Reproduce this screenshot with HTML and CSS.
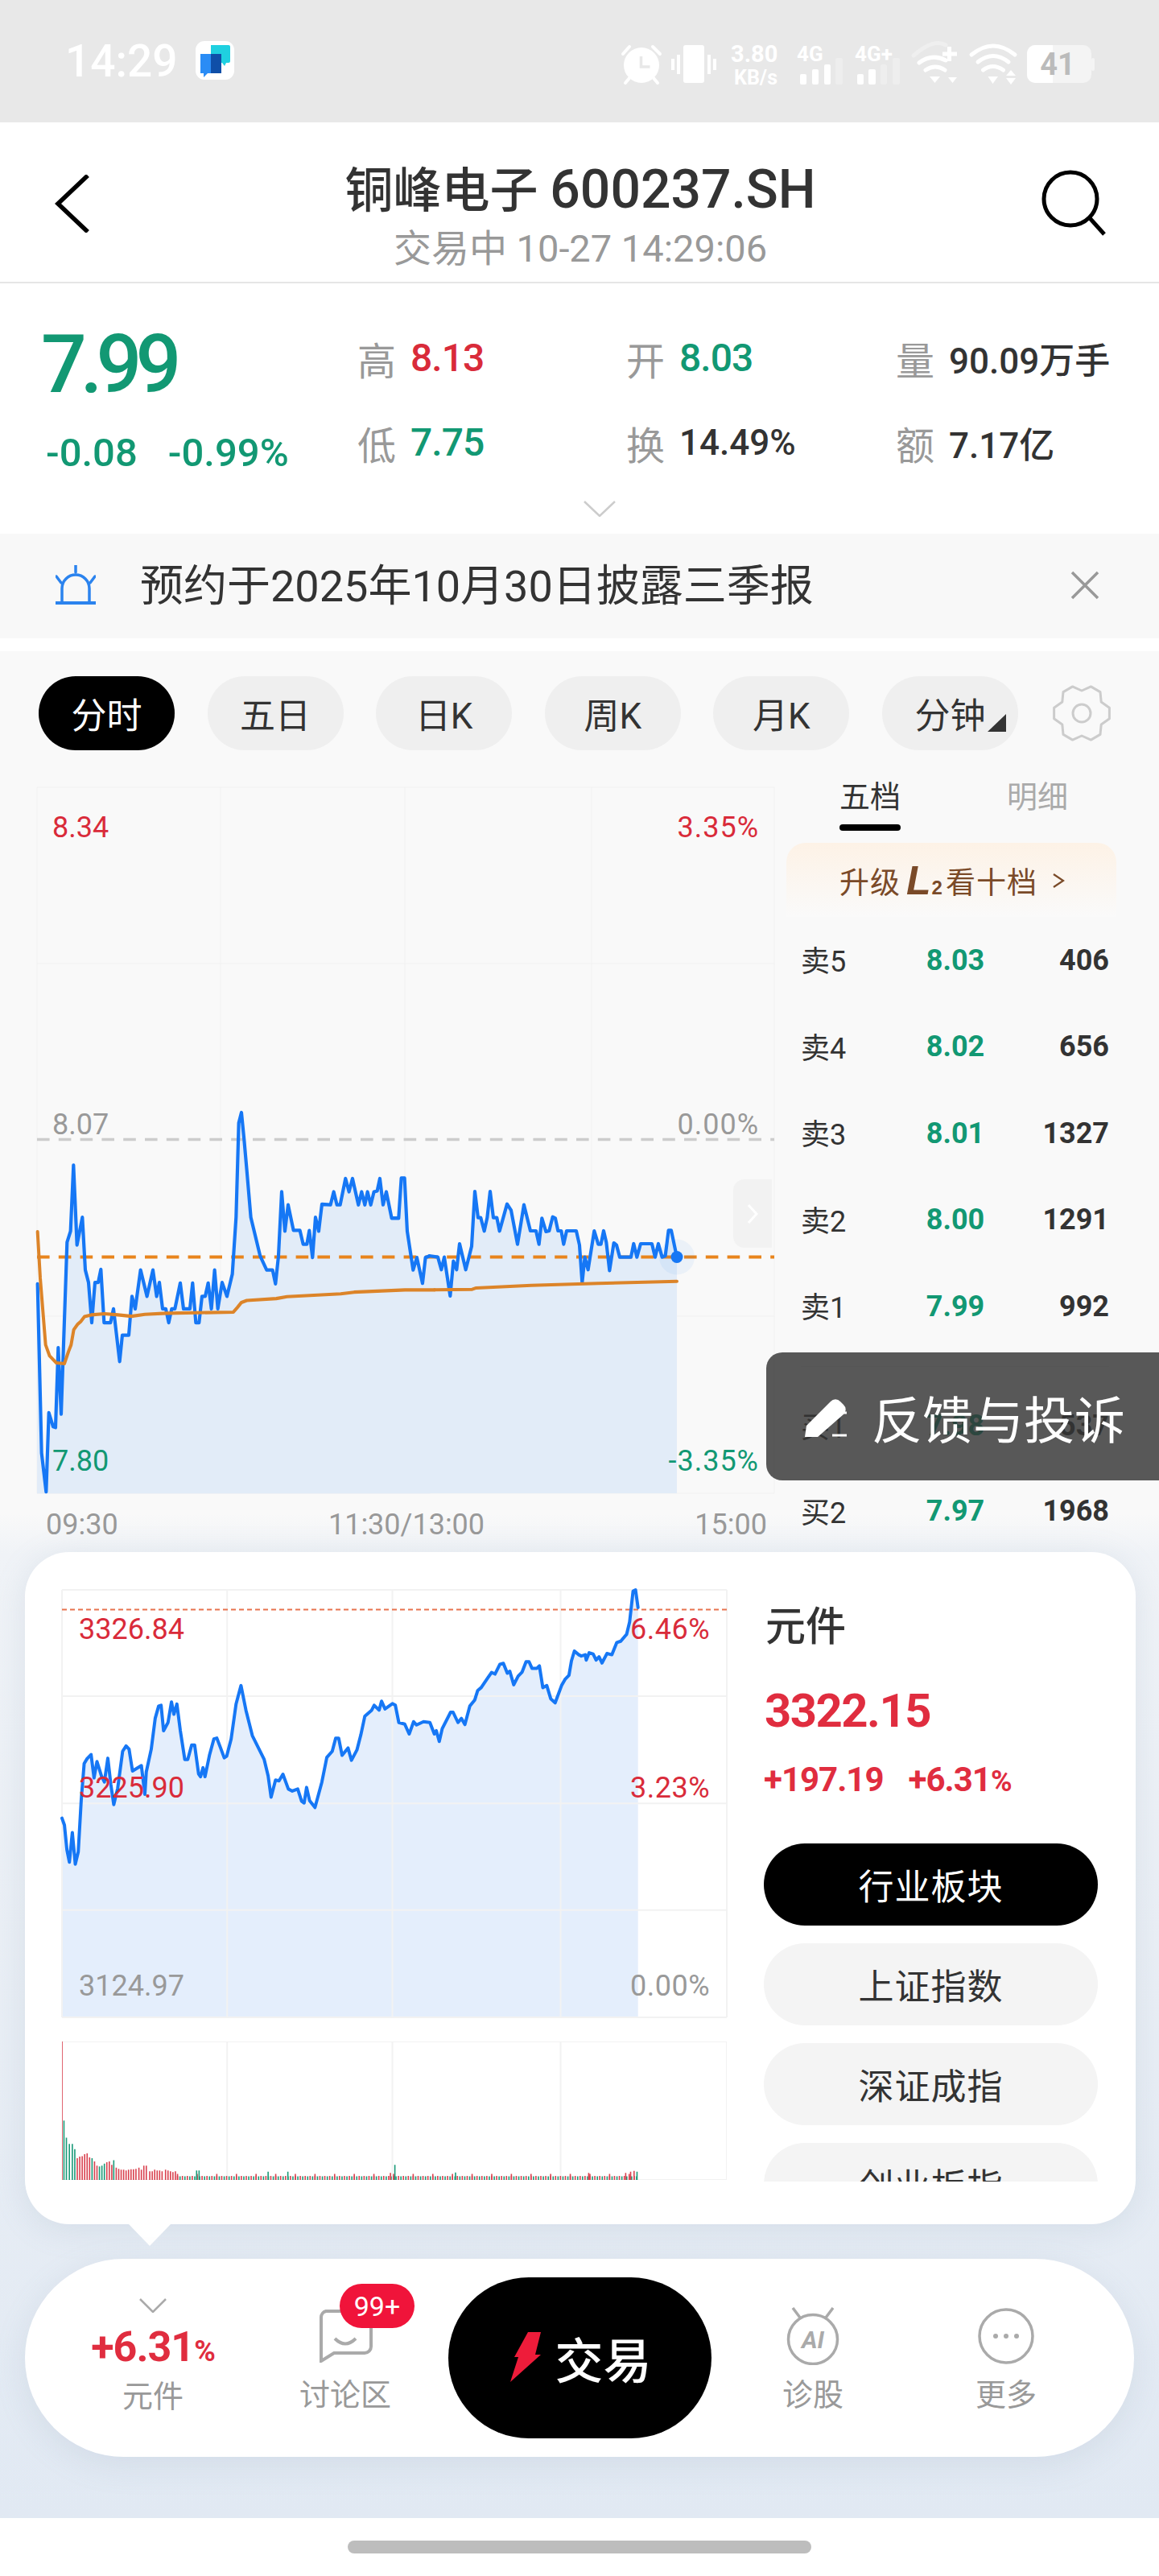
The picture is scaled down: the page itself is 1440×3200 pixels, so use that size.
FILE: index.html
```html
<!DOCTYPE html>
<html lang="zh-CN">
<head>
<meta charset="utf-8">
<title>铜峰电子 600237.SH</title>
<link rel="stylesheet" href="styles.css">
</head>
<body>
<div class="page">
  <div class="status">
    <span class="clock">14:29</span>
    <svg class="app-icon" viewBox="0 0 48 48"><rect width="48" height="48" rx="11" fill="#fff"/><path d="M19 5h22a2 2 0 0 1 2 2v18a2 2 0 0 1-2 2h-3l-2 4-3-4H19z" fill="#1fd0e0"/><path d="M6 16h24a2 2 0 0 1 2 2v20a2 2 0 0 1-2 2H15l-5 5v-5H6z" fill="#2a8cf5"/><rect x="19" y="16" width="13" height="24" fill="#0f4fa8"/></svg>
    <svg class="status-icons" viewBox="760 40 620 80">
      <g fill="#fff">
        <circle cx="797" cy="81" r="22"/>
        <g stroke="#fff" stroke-width="4" stroke-linecap="round" fill="none"><path d="M774 67l8-9M811 58l9 9M777 103l5-6M817 103l-5-6"/></g>
        <path d="M796.5 70v13h11" stroke="#e8e8e8" stroke-width="3.5" fill="none"/>
        <rect x="849" y="56" width="26" height="47" rx="3"/>
        <rect x="841" y="68" width="4" height="24"/><rect x="834" y="73" width="4" height="14"/><rect x="879" y="68" width="4" height="24"/><rect x="886" y="73" width="4" height="14"/>
        <text x="908" y="77" class="st-speed">3.80</text>
        <text x="912" y="105" class="st-unit">KB/s</text>
        <text x="990" y="76" class="st-net">4G</text>
        <rect x="994" y="92" width="8" height="13" rx="2"/><rect x="1009" y="86" width="8" height="19" rx="2"/><rect x="1024" y="80" width="8" height="25" rx="2"/><rect x="1038" y="72" width="9" height="33" rx="2" opacity=".25"/>
        <text x="1062" y="76" class="st-net">4G+</text>
        <rect x="1065" y="92" width="8" height="13" rx="2"/><rect x="1079" y="86" width="9" height="19" rx="2"/><rect x="1094" y="80" width="8" height="25" rx="2" opacity=".25"/><rect x="1109" y="72" width="9" height="33" rx="2" opacity=".25"/>
        <g fill="none" stroke="#fff" stroke-width="5" stroke-linecap="round">
          <path d="M1135 69q25-22 40-13" opacity=".3"/><path d="M1142 78q16-12 33-3"/><path d="M1150 87q12-8 24 0"/>
          <path d="M1179.500 58v18M1171 67h18" stroke-linecap="butt"/>
          <path d="M1207 68q27-22 54 0"/><path d="M1215 77q19-15 38 0"/><path d="M1221.500 87q12-9 25 0"/>
        </g>
        <path d="M1155 95h13l-6.500 8zM1178 96h11l-5.500 7zM1227.500 95h12.500l-6.500 9zM1250 94h12l-6-7zM1250 97h12l-6 8z"/>
        <rect x="1276" y="56" width="80" height="47" rx="10" opacity=".5"/>
        <path d="M1286 56h22v47h-22a10 10 0 0 1-10-10V66a10 10 0 0 1 10-10z"/>
        <rect x="1356" y="72" width="4" height="16" rx="2" opacity=".5"/>
      </g>
      <text x="1314" y="93" class="st-batt">41</text>
    </svg>
  </div>

  <header class="header">
    <svg class="back" viewBox="0 0 44 72"><path d="M41 1L4 36l37 35" fill="none" stroke="#000" stroke-width="5.500"/></svg>
    <div class="title-block">
      <div class="title">铜峰电子 <span class="title-code">600237.SH</span></div>
      <div class="subtitle">交易中 10-27 14:29:06</div>
    </div>
    <svg class="search" viewBox="0 0 80 82"><circle cx="36" cy="36" r="33" fill="none" stroke="#000" stroke-width="5"/><path d="M60 60l18 20" stroke="#000" stroke-width="5"/></svg>
  </header>

  <section class="quote">
    <div class="quote-grid">
      <div class="price-col">
        <div class="big-price">7.99</div>
        <div class="change"><span>-0.08</span><span>-0.99%</span></div>
      </div>
      <div class="stat"><span class="stat-k">高</span><span class="stat-v red">8.13</span></div>
      <div class="stat"><span class="stat-k">开</span><span class="stat-v green">8.03</span></div>
      <div class="stat"><span class="stat-k">量</span><span class="stat-v dark">90.09万手</span></div>
      <div class="stat"><span class="stat-k">低</span><span class="stat-v green">7.75</span></div>
      <div class="stat"><span class="stat-k">换</span><span class="stat-v dark">14.49%</span></div>
      <div class="stat"><span class="stat-k">额</span><span class="stat-v dark">7.17亿</span></div>
    </div>
    <svg class="more-chev" viewBox="0 0 40 20"><path d="M1 1l19 18L39 1" fill="none" stroke="#ccc" stroke-width="2.500"/></svg>
  </section>

  <section class="notice">
    <svg class="notice-icon" viewBox="0 0 50 50"><g fill="none" stroke="#2b83ee" stroke-width="3.500"><path d="M8 47V29a17 17 0 0 1 34 0v18"/><path d="M25 0v9M1 14l6 8M49 14l-6 8" stroke-linecap="round"/></g><rect y="45" width="50" height="4" fill="#2b83ee"/></svg>
    <span class="notice-text">预约于2025年10月30日披露三季报</span>
    <svg class="notice-close" viewBox="0 0 36 36"><path d="M2 2l32 32M34 2L2 34" fill="none" stroke="#999" stroke-width="3.500"/></svg>
  </section>

  <section class="market">
    <nav class="tabs">
      <span class="tab tab-on">分时</span>
      <span class="tab">五日</span>
      <span class="tab">日K</span>
      <span class="tab">周K</span>
      <span class="tab">月K</span>
      <span class="tab tab-menu">分钟</span>
      <svg class="gear" viewBox="-2 -2 74 72"><path d="M69.400 27.300L69.400 40.700 59.200 48 58 60.400 46.400 67.100 35 62 23.600 67.100 12 60.400 10.800 48 .6 40.700 .6 27.300 10.800 20 12 7.600 23.600 .9 35 6 46.400 .9 58 7.600 59.200 20z" fill="none" stroke="#ccc" stroke-width="3" stroke-linejoin="round"/><circle cx="35" cy="34" r="11" fill="none" stroke="#ccc" stroke-width="3"/></svg>
    </nav>

    <div class="board">
      <div class="chart-col">
        <div class="main-chart">
          <svg class="main-svg" viewBox="46 978 919 877">
            <g class="grid-lines">
              <path d="M46 978H962M46 1197H962M46 1635H962M46 1855H962M46 978V1855M274 978V1855M503 978V1855M735 978V1855M962 978V1855"/>
            </g>
            <g transform="translate(40 1340) scale(.3333 .3444)">
              <polygon class="area" points="18,1496 20,740 35,1350 52,1490 62,1205 78,1255 87,1258 97,970 108,1210 130,590 143,550 154,312 167,600 187,500 198,690 210,735 222,880 234,735 246,735 256,688 268,880 292,880 303,830 326,1020 336,925 360,925 372,785 384,830 404,690 428,785 450,690 464,785 474,735 486,830 498,830 509,880 520,830 532,830 552,737 564,830 588,830 598,737 610,880 622,880 633,785 645,785 656,737 668,830 680,690 692,830 708,735 726,785 746,705 760,500 770,160 780,122 790,220 800,330 815,500 850,640 874,690 896,690 907,740 918,640 930,408 942,550 954,455 974,547 998,547 1010,597 1024,597 1033,548 1045,645 1056,500 1068,550 1080,453 1112,455 1124,408 1136,455 1148,455 1168,360 1181,408 1194,360 1216,455 1228,408 1240,455 1250,408 1262,455 1274,408 1286,405 1296,360 1308,455 1320,408 1340,503 1366,503 1376,358 1388,358 1398,550 1420,690 1434,645 1455,738 1466,645 1480,640 1483,640 1483,1496"/>
            </g>
            <g transform="translate(480 1340) scale(.3333)">
              <polygon class="area" points="160,660 192,665 205,712 216,665 238,810 250,680 262,712 273,615 296,712 318,625 330,420 342,518 352,518 365,568 376,518 387,420 399,518 412,518 422,568 450,467 465,490 489,617 513,470 537,567 558,567 569,617 580,520 595,570 607,567 620,515 630,520 640,567 652,567 661,617 672,567 708,567 720,620 730,760 740,665 752,712 775,567 790,617 800,617 810,567 820,610 832,715 848,612 858,620 870,665 912,665 922,615 934,665 948,615 990,615 1002,665 1014,615 1028,665 1040,660 1052,565 1062,565 1083,665 1083,1545 160,1545"/>
            </g>
            <path class="dash-ref" d="M46 1415.500H962"/>
            <path class="dash-now" d="M46 1561.500H962"/>
            <g transform="translate(40 1340) scale(.3333 .3444)">
              <polyline class="line-price" points="20,740 35,1350 52,1490 62,1205 78,1255 87,1258 97,970 108,1210 130,590 143,550 154,312 167,600 187,500 198,690 210,735 222,880 234,735 246,735 256,688 268,880 292,880 303,830 326,1020 336,925 360,925 372,785 384,830 404,690 428,785 450,690 464,785 474,735 486,830 498,830 509,880 520,830 532,830 552,737 564,830 588,830 598,737 610,880 622,880 633,785 645,785 656,737 668,830 680,690 692,830 708,735 726,785 746,705 760,500 770,160 780,122 790,220 800,330 815,500 850,640 874,690 896,690 907,740 918,640 930,408 942,550 954,455 974,547 998,547 1010,597 1024,597 1033,548 1045,645 1056,500 1068,550 1080,453 1112,455 1124,408 1136,455 1148,455 1168,360 1181,408 1194,360 1216,455 1228,408 1240,455 1250,408 1262,455 1274,408 1286,405 1296,360 1308,455 1320,408 1340,503 1366,503 1376,358 1388,358 1398,550 1420,690 1434,645 1455,738 1466,645 1480,640"/>
              <polyline class="line-avg" points="20,552 30,720 50,960 65,1000 90,1025 120,1028 135,985 145,960 155,905 170,885 182,875 195,858 220,852 270,848 320,852 370,857 420,850 500,846 750,842 765,825 780,807 800,800 910,793 950,786 1150,776 1200,770 1390,762 1500,762"/>
            </g>
            <g transform="translate(480 1340) scale(.3333)">
              <polyline class="line-price" points="160,660 192,665 205,712 216,665 238,810 250,680 262,712 273,615 296,712 318,625 330,420 342,518 352,518 365,568 376,518 387,420 399,518 412,518 422,568 450,467 465,490 489,617 513,470 537,567 558,567 569,617 580,520 595,570 607,567 620,515 630,520 640,567 652,567 661,617 672,567 708,567 720,620 730,760 740,665 752,712 775,567 790,617 800,617 810,567 820,610 832,715 848,612 858,620 870,665 912,665 922,615 934,665 948,615 990,615 1002,665 1014,615 1028,665 1040,660 1052,565 1062,565 1083,665"/>
              <polyline class="line-avg" points="180,787 320,785 335,780 540,770 790,763 1083,755"/>
            </g>
            <circle cx="841" cy="1561.500" r="22" fill="#1677f5" opacity=".06"/>
            <circle cx="841" cy="1561.500" r="7.500" fill="#1677f5"/>
          </svg>
          <span class="axis-label left red lab-a">8.34</span>
          <span class="axis-label right red lab-a">3.35%</span>
          <span class="axis-label left gray lab-b">8.07</span>
          <span class="axis-label right gray lab-b">0.00%</span>
          <span class="axis-label left green lab-c">7.80</span>
          <span class="axis-label right green lab-c">-3.35%</span>
          <span class="side-btn"><svg viewBox="0 0 14 24"><path d="M2 1l10 11L2 23" fill="none" stroke="#fff" stroke-width="3"/></svg></span>
        </div>
        <div class="time-axis"><span>09:30</span><span>11:30/13:00</span><span>15:00</span></div>
      </div>

      <aside class="book">
        <div class="book-tabs"><span class="book-tab book-tab-on">五档</span><span class="book-tab">明细</span></div>
        <div class="upgrade">升级<span class="l2"><i>L</i><b>2</b></span>看十档<svg class="upgrade-chev" viewBox="0 0 16 20"><path d="M2 2l12 8L2 18" fill="none" stroke="#7a4a28" stroke-width="2.200"/></svg></div>
        <div class="row"><span>卖5</span><b class="green">8.03</b><b>406</b></div>
        <div class="row"><span>卖4</span><b class="green">8.02</b><b>656</b></div>
        <div class="row"><span>卖3</span><b class="green">8.01</b><b>1327</b></div>
        <div class="row"><span>卖2</span><b class="green">8.00</b><b>1291</b></div>
        <div class="row"><span>卖1</span><b class="green">7.99</b><b>992</b></div>
        <div class="book-div"></div>
        <div class="row"><span>买1</span><b class="green">7.98</b><b>537</b></div>
        <div class="row row-tight"><span>买2</span><b class="green">7.97</b><b>1968</b></div>
      </aside>
    </div>

    <div class="feedback">
      <svg class="feedback-icon" viewBox="0 0 52 50"><path d="M0 50l2-14L32 6a8 8 0 0 1 12 0l4 4a8 8 0 0 1 0 12L16 50z" fill="#fff"/><path d="M34 48h18M42 20h10" stroke="#fff" stroke-width="3"/></svg>
      <span>反馈与投诉</span>
    </div>
  </section>

  <footer class="home"><span class="home-bar"></span></footer>

  <div class="popover">
    <div class="pop-charts">
      <div class="pop-chart">
        <svg class="pop-svg" viewBox="127 107 1348 1041" preserveAspectRatio="none">
          <polygon class="pop-area" points="127,1148 127,663 132,680 137,740 142,770 148,698 154,775 160,745 166,620 172,530 178,518 186,508 192,565 198,525 207,560 213,575 220,517 226,580 232,630 240,590 250,500 257,487 263,495 270,548 288,535 295,605 298,550 308,495 316,420 323,390 328,388 333,450 342,430 349,380 354,410 360,385 367,450 376,520 382,520 390,485 396,485 404,555 408,562 413,540 417,562 426,510 435,470 441,468 448,490 456,516 461,512 470,470 480,385 490,340 500,400 513,462 537,520 545,560 551,612 560,570 567,572 575,556 586,592 594,597 605,592 613,622 618,626 623,588 629,620 640,637 654,575 664,515 675,500 682,468 688,468 695,510 707,492 714,522 725,497 733,460 741,415 755,400 760,388 770,400 775,378 782,397 797,384 803,388 810,430 822,434 831,458 840,428 846,436 860,428 873,430 882,458 886,450 892,476 898,445 915,405 920,405 930,430 937,420 944,435 954,390 964,375 970,352 977,345 990,322 998,308 1005,312 1015,288 1022,286 1030,310 1035,305 1043,338 1052,317 1060,307 1068,282 1074,282 1080,298 1090,298 1095,292 1102,345 1110,340 1118,372 1127,382 1140,340 1147,325 1155,315 1160,280 1166,256 1175,265 1180,268 1188,265 1190,278 1196,260 1204,263 1210,278 1216,270 1222,285 1232,262 1242,265 1252,235 1260,232 1272,215 1278,185 1285,110 1290,107 1295,150 1295,1148"/>
          <path class="pop-grid" d="M127 107H1475M127 366H1475M127 627H1475M127 887H1475M127 1148H1475M127 107V1148M462 107V1148M797 107V1148M1138 107V1148M1475 107V1148"/>
          <path class="pop-dash" d="M127 155H1475"/>
          <polyline class="pop-line" points="127,663 132,680 137,740 142,770 148,698 154,775 160,745 166,620 172,530 178,518 186,508 192,565 198,525 207,560 213,575 220,517 226,580 232,630 240,590 250,500 257,487 263,495 270,548 288,535 295,605 298,550 308,495 316,420 323,390 328,388 333,450 342,430 349,380 354,410 360,385 367,450 376,520 382,520 390,485 396,485 404,555 408,562 413,540 417,562 426,510 435,470 441,468 448,490 456,516 461,512 470,470 480,385 490,340 500,400 513,462 537,520 545,560 551,612 560,570 567,572 575,556 586,592 594,597 605,592 613,622 618,626 623,588 629,620 640,637 654,575 664,515 675,500 682,468 688,468 695,510 707,492 714,522 725,497 733,460 741,415 755,400 760,388 770,400 775,378 782,397 797,384 803,388 810,430 822,434 831,458 840,428 846,436 860,428 873,430 882,458 886,450 892,476 898,445 915,405 920,405 930,430 937,420 944,435 954,390 964,375 970,352 977,345 990,322 998,308 1005,312 1015,288 1022,286 1030,310 1035,305 1043,338 1052,317 1060,307 1068,282 1074,282 1080,298 1090,298 1095,292 1102,345 1110,340 1118,372 1127,382 1140,340 1147,325 1155,315 1160,280 1166,256 1175,265 1180,268 1188,265 1190,278 1196,260 1204,263 1210,278 1216,270 1222,285 1232,262 1242,265 1252,235 1260,232 1272,215 1278,185 1285,110 1290,107 1295,150"/>
        </svg>
        <span class="pop-label left red pop-a">3326.84</span>
        <span class="pop-label right red pop-a">6.46%</span>
        <span class="pop-label left red pop-b">3225.90</span>
        <span class="pop-label right red pop-b">3.23%</span>
        <span class="pop-label left gray pop-c">3124.97</span>
        <span class="pop-label right gray pop-c">0.00%</span>
      </div>
      <svg class="vol-svg" viewBox="127 1207 1348 338" preserveAspectRatio="none">
        <path class="pop-grid" d="M127 1207H1475M127 1545H1475M462 1207V1545M797 1207V1545M1138 1207V1545M1475 1207V1545"/>
        <path class="vol-tail-r" d="M360 1545H1295"/>
        <path class="vol-tail-g" d="M360 1545H1295"/>
        <path class="vol-tail-r2" d="M360 1545H1295"/>
        <path class="vol-red" d="M127 1545V1207M158 1545V1492M163 1545V1488M168 1545V1487M173 1545V1482M178 1545V1480M183 1545V1490M193 1545V1500M198 1545V1510M218 1545V1502M223 1545V1500M228 1545V1508M237 1545V1515M242 1545V1518M247 1545V1520M252 1545V1520M257 1545V1522M262 1545V1520M267 1545V1519M272 1545V1519M277 1545V1518M283 1545V1515M288 1545V1520M293 1545V1510M298 1545V1510M305 1545V1524M310 1545V1524M315 1545V1520M320 1545V1522M325 1545V1522M330 1545V1524M337 1545V1520M342 1545V1522M347 1545V1524M352 1545V1526M357 1545V1524M793 1545V1528M1195 1545V1528M1270 1545V1528M1280 1545V1525M1287 1545V1523"/>
        <path class="vol-green" d="M131 1545V1400M136 1545V1442M142 1545V1457M148 1545V1457M153 1545V1470M188 1545V1492M203 1545V1512M208 1545V1510M213 1545V1505M232 1545V1497M400 1545V1522M405 1545V1522M545 1545V1525M585 1545V1525M802 1545V1508M925 1545V1527M1293 1545V1525"/>
      </svg>
    </div>
    <div class="pop-side">
      <div class="pop-name">元件</div>
      <div class="pop-price">3322.15</div>
      <div class="pop-change"><span>+197.19</span><span>+6.31<small>%</small></span></div>
      <div class="index-list">
        <span class="index-btn index-on">行业板块</span>
        <span class="index-btn">上证指数</span>
        <span class="index-btn">深证成指</span>
        <span class="index-btn">创业板指</span>
      </div>
    </div>
    <span class="pop-arrow"></span>
  </div>

  <nav class="dock">
    <div class="dock-item dock-first">
      <svg class="dock-chev" viewBox="0 0 34 18"><path d="M1 1l16 16L33 1" fill="none" stroke="#aaa" stroke-width="2.500"/></svg>
      <div class="dock-value">+6.31<small>%</small></div>
      <div class="dock-label">元件</div>
    </div>
    <div class="dock-item dock-discuss">
      <div class="dock-icon"><svg class="ic-bubble" viewBox="0 0 68 66"><path d="M10 2h48a8 8 0 0 1 8 8v36a8 8 0 0 1-8 8H20L4 64V10a8 8 0 0 1 6-8z" fill="none" stroke="#aaa" stroke-width="4"/><path d="M21 36q13 13 26 0" fill="none" stroke="#aaa" stroke-width="4"/></svg></div>
      <div class="dock-label">讨论区</div>
      <span class="badge">99+</span>
    </div>
    <div class="trade">
      <svg class="bolt" viewBox="0 0 42 62"><path d="M24 0h16l-7 28h7L2 62l10-31H7z" fill="#ee1c3a"/></svg>
      <span>交易</span>
    </div>
    <div class="dock-item dock-wide">
      <div class="dock-icon"><svg class="ic-ai" viewBox="0 0 66 72"><g fill="none" stroke="#aaa" stroke-width="3.500"><circle cx="33" cy="40" r="30.500"/><path d="M8 1l9 12M58 1l-9 12"/></g><text x="33" y="51" class="ai-text">AI</text></svg></div>
      <div class="dock-label">诊股</div>
    </div>
    <div class="dock-item dock-wide dock-last">
      <div class="dock-icon"><svg class="ic-more" viewBox="0 0 72 72"><circle cx="36" cy="36" r="33" fill="none" stroke="#aaa" stroke-width="3.500"/><circle cx="23" cy="36" r="3" fill="#aaa"/><circle cx="36" cy="36" r="3" fill="#aaa"/><circle cx="49" cy="36" r="3" fill="#aaa"/></svg></div>
      <div class="dock-label">更多</div>
    </div>
  </nav>
</div>
</body>
</html>
```
FILE: styles.css
```css
* { box-sizing: border-box; }
html, body { margin: 0; padding: 0; }
body { font-family: Roboto, "Noto Sans CJK SC", sans-serif; color: #333; background: #fff; }
.page { position: relative; width: 1440px; height: 3200px; overflow: hidden; display: flex; flex-direction: column; background: #fff; }
.red { color: #d92b3a; }
.green { color: #129873; }
.gray { color: #999; }
.dark { color: #333; }

/* status bar */
.status { position: relative; flex: none; height: 152px; background: #e8e8e8; display: flex; align-items: center; padding-left: 81px; }
.clock { font-size: 55px; font-weight: 500; color: #fff; line-height: 1; margin-top: 1px; }
.app-icon { width: 48px; height: 48px; margin-left: 22px; margin-top: -2px; }
.status-icons { width: 620px; height: 80px; margin-left: auto; margin-right: 60px; margin-top: 8px; overflow: visible; }
.st-speed { font: 700 29px Roboto, sans-serif; }
.st-unit { font: 700 25px Roboto, sans-serif; }
.st-net { font: 700 26px Roboto, sans-serif; }
.st-batt { font: 700 38px Roboto, sans-serif; fill: #bbb; text-anchor: middle; }

/* header */
.header { flex: none; height: 200px; display: grid; grid-template-columns: 1fr auto 1fr; align-items: start; padding: 0 66px 0 68px; border-bottom: 2px solid #e6e6e6; }
.back { width: 44px; height: 72px; margin-top: 65px; }
.search { width: 80px; height: 82px; margin-top: 59px; justify-self: end; }
.title-block { padding-top: 49px; text-align: center; }
.title { font-size: 60px; line-height: 70px; font-weight: 500; color: #333; white-space: nowrap; }
.title-code { font-size: 66px; line-height: 70px; }
.subtitle { font-size: 47px; line-height: 72px; color: #999; }

/* quote */
.quote { flex: none; height: 311px; padding-top: 40px; }
.quote-grid { display: grid; grid-template-columns: 391px 334px 335px auto; grid-auto-rows: 105px; padding-left: 53px; }
.price-col { grid-row: span 2; position: relative; }
.big-price { font-size: 100px; line-height: 120px; font-weight: 500; letter-spacing: -8px; color: #129873; margin-top: 1px; margin-left: -2px; }
.change { display: flex; gap: 38px; font-size: 49px; line-height: 60px; font-weight: 500; color: #129873; margin-left: 4px; margin-top: 20px; }
.stat { display: flex; align-items: center; gap: 18px; }
.stat-k { font-size: 48px; color: #999; }
.stat-v { font-size: 48px; font-weight: 500; letter-spacing: -1px; }
.stat-v.dark { font-size: 44px; letter-spacing: 0; }
.more-chev { display: block; width: 40px; height: 20px; margin: 20px 0 0 725px; }

/* notice */
.notice { flex: none; height: 130px; background: #f8f8f8; display: flex; align-items: center; padding: 0 74px 0 69px; }
.notice-icon { width: 50px; height: 50px; margin-top: -3px; }
.notice-text { font-size: 54px; line-height: 130px; margin-left: 55px; margin-top: 2px; color: #333; }
.notice-close { width: 36px; height: 36px; margin-left: auto; margin-top: -2px; }

/* market */
.market { position: relative; flex: 1; margin-top: 16px; background: linear-gradient(#f9f9f9 0, #f9f9f9 1071px, #f0f3f7 1121px, #e1e9f3 100%); }
.tabs { display: flex; align-items: center; gap: 40.600px; padding: 31px 0 0 48px; }
.tab { width: 169px; height: 92px; border-radius: 46px; background: #efefef; display: flex; align-items: center; justify-content: center; font-size: 44px; color: #333; position: relative; }
.tab-on { background: #000; color: #fff; }
.tab-menu::after { content: ""; position: absolute; left: 131px; top: 47px; border-style: solid; border-width: 0 0 22px 23px; border-color: transparent transparent #333 transparent; }
.gear { width: 74px; height: 72px; margin-left: 1px; }

.board { display: flex; align-items: flex-start; margin-top: 28px; }
.chart-col { width: 965px; padding: 18px 0 0 46px; }
.main-chart { position: relative; width: 919px; height: 877px; }
.main-svg { display: block; width: 919px; height: 877px; overflow: visible; }
.grid-lines path { fill: none; stroke: #f3f3f3; stroke-width: 1.500; }
.area { fill: #e2ecf8; }
.line-price { fill: none; stroke: #1677f5; stroke-width: 12.500; stroke-linejoin: round; stroke-linecap: round; }
.line-avg { fill: none; stroke: #dc8429; stroke-width: 12; stroke-linejoin: round; stroke-linecap: round; }
.dash-ref { fill: none; stroke: #ccc; stroke-width: 3.500; stroke-dasharray: 15.600 11.200; }
.dash-now { fill: none; stroke: #e8841c; stroke-width: 4; stroke-dasharray: 15.600 11.200; }
.axis-label { position: absolute; font-size: 36px; line-height: 40px; }
.axis-label.left { left: 19px; }
.axis-label.right { right: 22px; letter-spacing: 1px; }
.lab-a { top: 30px; }
.lab-b { top: 399px; }
.lab-c { top: 817px; }
.side-btn { position: absolute; left: 865px; top: 487px; width: 48px; height: 85px; background: #f2f2f2; border-radius: 14px 0 0 14px; display: flex; align-items: center; justify-content: center; }
.side-btn svg { width: 14px; height: 24px; }
.time-axis { display: flex; justify-content: space-between; width: 919px; padding: 19px 12px 0 11px; font-size: 36px; line-height: 40px; color: #999; }

.book { width: 475px; padding-right: 62px; }
.book-tabs { display: flex; height: 72px; padding-left: 78px; gap: 132px; position: relative; }
.book-tab { font-size: 38px; line-height: 60px; color: #aaa; width: 76px; position: relative; white-space: nowrap; }
.book-tab-on { color: #333; }
.book-tab-on::after { content: ""; position: absolute; left: 0; top: 64px; width: 76px; height: 8px; border-radius: 4px; background: #000; }
.upgrade { margin: 15px 0 0 12px; width: 410px; height: 92px; border-radius: 24px 24px 0 0; background: linear-gradient(#fdf2e6, #fafafa 100%); display: flex; align-items: center; padding: 2px 0 0 66px; font-size: 37px; color: #7a4a28; letter-spacing: 1px; }
.l2 { font-family: "Liberation Sans", sans-serif; font-weight: 700; margin: 0 3px 0 7px; display: inline-flex; align-items: baseline; }
.l2 i { font-size: 50px; line-height: 1; }
.l2 b { font-size: 24px; }
.upgrade-chev { width: 16px; height: 20px; margin-left: 18px; }
.row { display: grid; grid-template-columns: 115px 154px 114px; height: 107.500px; margin-left: 30px; align-items: center; font-size: 36px; color: #333; }
.row span { margin-top: -3px; }
.row b { font-family: Roboto, sans-serif; font-size: 36px; font-weight: 700; }
.row b:nth-child(2) { text-align: center; }
.row b:nth-child(3) { text-align: right; }
.row-tight { height: 104px; }
.book-div { height: 41px; margin-left: 30px; position: relative; }
.book-div::after { content: ""; position: absolute; left: 0; right: 0; top: 20px; height: 1px; background: #eee; }

.feedback { position: absolute; right: 0; top: 871px; width: 488px; height: 159px; border-radius: 20px 0 0 20px; background: rgba(50, 50, 50, .81); display: flex; align-items: center; padding-left: 48px; gap: 31px; color: #fff; font-size: 63px; }
.feedback-icon { width: 52px; height: 50px; }

/* home bar */
.home { flex: none; height: 72px; background: #fff; display: flex; align-items: center; justify-content: center; }
.home-bar { width: 576px; height: 16px; border-radius: 8px; background: #bdbdbd; }

/* popover */
.popover { position: absolute; left: 31px; top: 1928px; width: 1380px; height: 835px; border-radius: 55px; background: #fff; display: flex; padding: 47px 0 0 46px; gap: 46px; box-shadow: 0 6px 40px rgba(120, 140, 165, .16); }
.pop-charts { width: 826px; }
.pop-chart { position: relative; width: 826px; height: 531px; }
.pop-svg { display: block; width: 826px; height: 531px; overflow: visible; }
.pop-area { fill: #e4eefc; }
.pop-grid { fill: none; stroke: #f2f2f2; stroke-width: 2; vector-effect: non-scaling-stroke; }
.pop-dash { fill: none; stroke: #e8734f; stroke-width: 2; stroke-dasharray: 6 4; vector-effect: non-scaling-stroke; }
.pop-line { fill: none; stroke: #1677f5; stroke-width: 4; stroke-linejoin: round; stroke-linecap: round; vector-effect: non-scaling-stroke; }
.pop-label { position: absolute; font-size: 36px; line-height: 40px; }
.pop-label.left { left: 21px; }
.pop-label.right { right: 21px; letter-spacing: .5px; }
.pop-a { top: 29px; }
.pop-b { top: 226px; }
.pop-c { top: 472px; }
.vol-svg { display: block; width: 826px; height: 172px; margin-top: 30px; overflow: hidden; }
.vol-red { fill: none; stroke: #d9414f; stroke-width: 1.600; vector-effect: non-scaling-stroke; }
.vol-green { fill: none; stroke: #1a9a78; stroke-width: 1.600; vector-effect: non-scaling-stroke; }
.vol-tail-r { fill: none; stroke: #d9414f; stroke-width: 10; stroke-dasharray: 1.600 4.500; vector-effect: non-scaling-stroke; }
.vol-tail-g { fill: none; stroke: #1a9a78; stroke-width: 9; stroke-dasharray: 1.600 4.500; stroke-dashoffset: 3; vector-effect: non-scaling-stroke; }
.vol-tail-r2 { fill: none; stroke: #d9414f; stroke-width: 15; stroke-dasharray: 1.600 22.800; vector-effect: non-scaling-stroke; }
.pop-side { width: 415px; }
.pop-name { font-size: 50px; line-height: 92px; font-weight: 500; padding-left: 2px; color: #333; }
.pop-price { font-size: 58px; line-height: 116px; font-weight: 700; letter-spacing: -1.500px; color: #e02d3f; padding-left: 1px; }
.pop-change { display: flex; gap: 31px; font-size: 42px; line-height: 56px; font-weight: 700; letter-spacing: -1px; color: #e02d3f; }
.pop-change small { font-size: 36px; letter-spacing: 0; }
.index-list { display: flex; flex-direction: column; gap: 22px; margin-top: 49px; height: 420px; overflow: hidden; }
.index-btn { flex: none; height: 102px; border-radius: 51px; background: #f4f4f4; display: flex; align-items: center; justify-content: center; font-size: 44px; letter-spacing: 1px; color: #333; }
.index-on { background: #000; color: #fff; }
.pop-arrow { position: absolute; left: 129px; top: 835px; width: 0; height: 0; border-style: solid; border-width: 27px 26px 0 26px; border-color: #fff transparent transparent transparent; }

/* dock */
.dock { position: absolute; left: 31px; top: 2806px; width: 1378px; height: 246px; border-radius: 123px; background: #fff; display: flex; box-shadow: 0 10px 40px rgba(120, 140, 165, .14); }
.dock-item { position: relative; display: flex; flex-direction: column; align-items: center; padding-top: 60px; }
.dock-first { width: 318px; padding-top: 49px; }
.dock-discuss { width: 160px; }
.dock-wide { width: 200px; margin-left: 26px; }
.dock-last { margin-left: 40px; }
.dock-chev { width: 34px; height: 18px; }
.dock-value { font-size: 52px; line-height: 62px; font-weight: 700; letter-spacing: -1px; color: #e02d3f; margin-top: 12px; }
.dock-value small { font-size: 36px; }
.dock-icon { height: 72px; display: flex; align-items: center; justify-content: center; }
.dock-label { font-size: 38px; line-height: 50px; color: #999; margin-top: 12px; }
.dock-first .dock-label { margin-top: 0; }
.ic-bubble { width: 68px; height: 66px; }
.ic-ai { width: 66px; height: 72px; }
.ic-more { width: 72px; height: 72px; }
.ai-text { font: italic 700 30px Roboto, sans-serif; fill: #aaa; text-anchor: middle; }
.badge { position: absolute; left: 73px; top: 31px; width: 93px; height: 55px; border-radius: 28px; background: #f0143a; color: #fff; font-size: 34px; display: flex; align-items: center; justify-content: center; }
.trade { flex: none; width: 327px; height: 200px; margin: 23px 0 0 48px; border-radius: 100px; background: #000; display: flex; align-items: center; justify-content: center; gap: 16px; color: #fff; font-size: 60px; font-weight: 500; padding-bottom: 2px; }
.bolt { width: 42px; height: 62px; }
```
